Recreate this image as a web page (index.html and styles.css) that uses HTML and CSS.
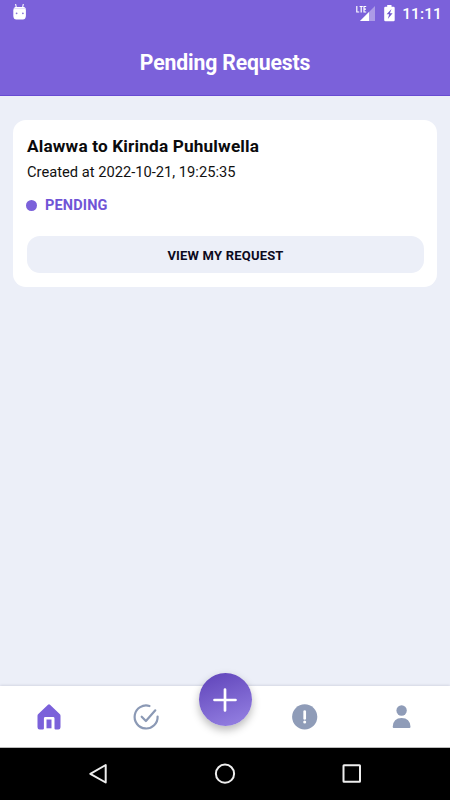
FILE: index.html
```html
<!DOCTYPE html>
<html lang="en">
<head>
<meta charset="utf-8">
<title>Pending Requests</title>
<link rel="stylesheet" href="styles.css">
</head>
<body>
<div class="app">
  <header class="header">
    <div class="status">
      <svg class="status-bot" width="16" height="18" viewBox="0 0 16 18">
        <path d="M3.600 1l.6 3M11.300 1l-.6 3" stroke="#fff" stroke-width="1.100"/>
        <path d="M3.300 4h8.800q1.400 0 1.800 3v6q-.4 3.600-3 3.600H4.300q-2.700 0-3-3.600V7q.6-3 2-3z" fill="#fff"/>
        <path d="M1.800 5.600h12" stroke="#d9d1f4" stroke-width=".8"/>
        <circle cx="4.600" cy="10.300" r=".9" fill="#8874d7"/><circle cx="10.900" cy="10.300" r=".9" fill="#8874d7"/>
      </svg>
      <div class="status-right">
        <svg width="20" height="18" viewBox="0 0 20 18">
          <path d="M19 1v15H4z" fill="#ac9be6"/>
          <path d="M13 7v9H4z" fill="#fff"/>
          <path d="M0 0h11v8H0z" fill="#7b61da"/>
          <path d="M.8 1v6h2.400M3.600 1.500h3.200M5.200 1.500V7.500M10.200 1.500H8v5.500h2.200M8 4.200h2" fill="none" stroke="#fff" stroke-width="1.200"/>
        </svg>
        <svg class="battery" width="11" height="17" viewBox="0 0 11 17">
          <path d="M3.200 0h4.300v1.700h2q1.200 0 1.200 1.200v12q0 1.300-1.200 1.300h-8Q.2 16.200.2 14.900v-12q0-1.200 1.300-1.200h1.700z" fill="#fff"/>
          <path d="M7.500 4L2.600 9.300h2.600L3.800 14l4.800-5.700H5.900z" fill="#7056cf"/>
        </svg>
        <span class="clock">11:11</span>
      </div>
    </div>
    <h1 class="title">Pending Requests</h1>
  </header>

  <main class="content">
    <article class="card">
      <h2 class="route">Alawwa to Kirinda Puhulwella</h2>
      <p class="created">Created at 2022-10-21, 19:25:35</p>
      <div class="state"><span class="dot"></span><span class="state-text">PENDING</span></div>
      <button class="view">VIEW MY REQUEST</button>
    </article>
  </main>

  <nav class="tabs">
    <a class="tab"><svg width="28" height="28" viewBox="0 0 28 28">
      <path d="M14 1.200q.5 0 1 .5L24.700 11q.8.800.8 1.800v11.500q0 2.200-2.200 2.200h-2.700q-1.100 0-1.100-1.100v-10q0-1.400-1.400-1.400h-7.800q-1.400 0-1.400 1.400v10q0 1.100-1.100 1.100H4.700q-2.200 0-2.200-2.200V12.800q0-1 .8-1.800L13 1.700q.5-.5 1-.5z" fill="#7b61da"/>
      <path d="M11.500 16.500h5v8.800h-5z" fill="#7b61da"/>
    </svg></a>
    <a class="tab"><svg width="28" height="28" viewBox="0 0 28 28" fill="none" stroke="#8b99b5" stroke-width="2.200" stroke-linecap="round" stroke-linejoin="round">
      <path d="M17.500 3A11.500 11.500 0 1 0 25.600 13.500"/>
      <path d="M9.700 13.700l4.200 4.300L23.300 7.300"/>
    </svg></a>
    <a class="tab tab-add"><span class="fab"><svg width="26" height="26" viewBox="0 0 26 26">
      <path d="M13 2.500v21M2.500 13h21" stroke="#fff" stroke-width="2.700" stroke-linecap="round"/>
    </svg></span></a>
    <a class="tab"><svg width="28" height="28" viewBox="0 0 28 28">
      <circle cx="13.700" cy="13.800" r="12.600" fill="#8f9cb8"/>
      <path d="M13.700 8.500v7" stroke="#fff" stroke-width="2.700" stroke-linecap="round"/>
      <circle cx="13.700" cy="19" r="1.500" fill="#fff"/>
    </svg></a>
    <a class="tab"><svg width="28" height="28" viewBox="0 0 28 28">
      <circle cx="13.600" cy="7.500" r="5.200" fill="#8f9cb8"/>
      <path d="M4.700 23.700Q5.200 15 13.600 15t8.900 8.700q0 1.400-1.100 1.400H5.800q-1.100 0-1.100-1.400z" fill="#8f9cb8"/>
    </svg></a>
  </nav>

  <div class="system">
    <svg width="24" height="24" viewBox="0 0 24 24"><path d="M19.700 3v17.500L4.300 11.800z"/></svg>
    <svg width="24" height="24" viewBox="0 0 24 24"><circle cx="12" cy="11.700" r="9.100"/></svg>
    <svg width="24" height="24" viewBox="0 0 24 24"><rect x="3.500" y="3.300" width="16.500" height="16.500" rx=".5"/></svg>
  </div>
</div>
</body>
</html>
```

FILE: styles.css
```css
* { box-sizing: border-box; margin: 0; padding: 0; }
body { font-family: Roboto, "Liberation Sans", sans-serif; }
svg { display: block; flex: none; }
.app { width: 450px; height: 800px; display: flex; flex-direction: column; background: #eceff8; overflow: hidden; }

.header { height: 96px; background: #7b61da; border-bottom: 1px solid #684bd2; color: #fff; }
.status { height: 28px; padding: 0 8px 0 12px; display: flex; align-items: center; justify-content: space-between; }
.status-bot { margin-top: -5px; }
.status-right { display: flex; align-items: center; }
.battery { margin-left: 8px; margin-top: -1px; }
.clock { margin-left: 7px; font-size: 15.500px; line-height: 28px; font-weight: 500; letter-spacing: .1px; }
.title { margin-top: 18px; text-align: center; font-size: 21.200px; line-height: 34px; font-weight: 700; letter-spacing: -.15px; }

.content { flex: 1; padding: 24px 13px 0; }
.card { height: 167px; padding: 14px 13px 0 14px; border-radius: 13px; background: #fff; }
.route { font-size: 17.200px; line-height: 25px; font-weight: 700; letter-spacing: .17px; color: #0b0b0d; }
.created { margin-top: 1px; font-size: 14.700px; line-height: 25px; color: #111; }
.state { display: flex; align-items: center; gap: 8px; height: 20px; margin-top: 10px; margin-left: -1px; }
.dot { width: 11px; height: 11px; border-radius: 50%; background: #7b61da; }
.state-text { font-size: 14.500px; font-weight: 700; letter-spacing: .15px; color: #7054d6; }
.view { display: block; width: 100%; height: 37px; margin-top: 21px; padding-top: 1px; border: 0; border-radius: 13px; background: #eceff8; color: #0c0a20; font: 700 13px Roboto, "Liberation Sans", sans-serif; letter-spacing: .2px; }

.tabs { height: 62px; display: flex; background: #fff; border-bottom: 1px solid #bbb; box-shadow: 0 -1px 2px rgba(60, 60, 90, .12); }
.tab { width: 97px; display: flex; justify-content: center; padding-top: 17px; }
.tab-add { width: 62px; padding-top: 0; }
.fab { width: 53px; height: 53px; margin-top: -13px; border-radius: 50%; display: flex; align-items: center; justify-content: center; background: linear-gradient(160deg, #6449bd 10%, #9480e2 95%); box-shadow: 0 4px 8px rgba(0, 0, 0, .28); }

.system { height: 52px; padding: 0 35px; display: flex; justify-content: space-around; align-items: center; background: #000; }
.system svg { fill: none; stroke: #eee; stroke-width: 2; stroke-linejoin: round; }
```
